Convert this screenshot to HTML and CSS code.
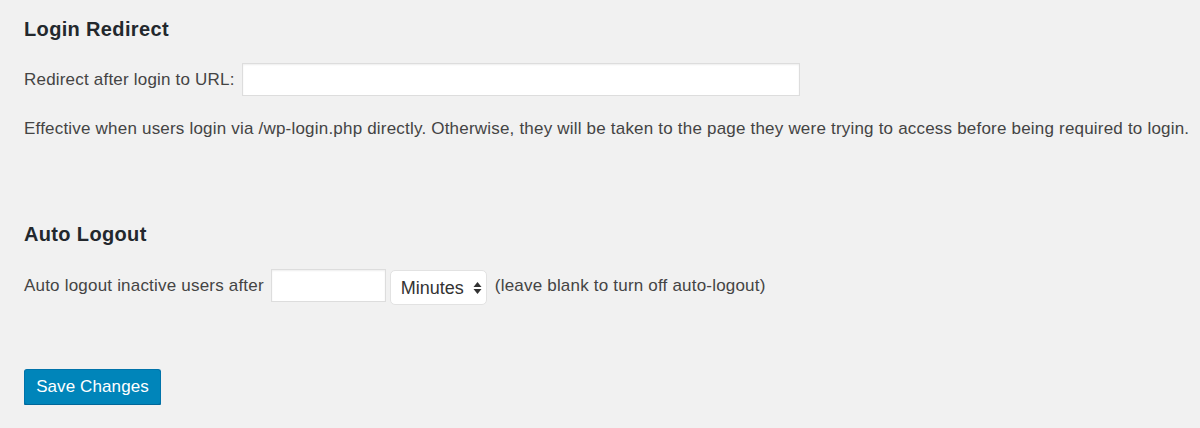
FILE: index.html
```html
<!DOCTYPE html>
<html lang="en">
<head>
    <meta charset="UTF-8">
    <title>Settings</title>
    <link rel="stylesheet" href="styles.css">
</head>
<body>
    <div class="wrap">
        <!-- Login redirect -->
        <h2 class="section-title">Login Redirect</h2>
        <div class="field-row">
            <label for="redirect-url">Redirect after login to URL:</label>
            <input type="text" id="redirect-url" class="url-input">
        </div>
        <p class="description">Effective when users login via /wp-login.php directly. Otherwise, they will be taken to the page they were trying to access before being required to login.</p>

        <!-- Auto logout -->
        <h2 class="section-title second">Auto Logout</h2>
        <div class="field-row logout">
            <label for="logout-time">Auto logout inactive users after</label>
            <input type="text" id="logout-time" class="small-input">
            <div class="select-wrap">
                <select>
                    <option>Minutes</option>
                    <option>Hours</option>
                    <option>Days</option>
                </select>
                <svg class="select-arrows" width="9" height="14" viewBox="0 0 9 14">
                    <path d="M4.5 1 L8.5 6 L0.5 6 Z" fill="#333"/>
                    <path d="M4.5 13 L8.5 8 L0.5 8 Z" fill="#333"/>
                </svg>
            </div>
            <span class="hint">(leave blank to turn off auto-logout)</span>
        </div>

        <div class="submit">
            <button class="button-primary">Save Changes</button>
        </div>
    </div>
</body>
</html>
```

FILE: styles.css
```css
body {
    margin: 0;
    background: #f1f1f1;
    font-family: "Liberation Sans", Arial, sans-serif;
    color: #444;
    font-size: 17px;
    letter-spacing: 0.2px;
}

.wrap {
    padding: 16px 24px 0;
}

/* Titulos das secoes */
.section-title {
    margin: 0;
    font-size: 20px;
    line-height: 26px;
    font-weight: bold;
    letter-spacing: 0.35px;
    color: #23282d;
}

.section-title.second {
    margin-top: 80px;
}

.field-row {
    display: flex;
    align-items: center;
    margin-top: 21px;
}

.field-row.logout {
    margin-top: 19px;
}

.field-row label {
    margin-right: 7px;
}

.url-input,
.small-input {
    box-sizing: border-box;
    height: 33px;
    border: 1px solid #ddd;
    box-shadow: inset 0 1px 2px rgba(0, 0, 0, 0.07);
    background: #fff;
    padding: 3px 6px;
    font-size: 16px;
    font-family: inherit;
    margin: 0;
}

.url-input {
    width: 558px;
}

.small-input {
    width: 115px;
    margin-right: 4px;
}

.select-wrap {
    position: relative;
    margin-top: 4px;
    margin-right: 8px;
}

.select-wrap select {
    appearance: none;
    -webkit-appearance: none;
    box-sizing: border-box;
    width: 97px;
    height: 35px;
    border: 1px solid #e2e2e2;
    border-radius: 5px;
    background: #fff;
    font-family: inherit;
    font-size: 18px;
    color: #333;
    padding: 0 20px 0 10px;
    margin: 0;
}

.select-arrows {
    position: absolute;
    right: 5px;
    top: 11px;
    pointer-events: none;
}

.description {
    margin: 21px 0 0;
    line-height: 24px;
    white-space: nowrap;
}

.submit {
    margin-top: 64px;
}

.button-primary {
    box-sizing: border-box;
    width: 137px;
    height: 36px;
    background: #0085ba;
    border: 1px solid #0073aa;
    border-bottom-color: #006799;
    box-shadow: 0 1px 0 #006799;
    border-radius: 3px;
    color: #fff;
    font-family: inherit;
    font-size: 17px;
    letter-spacing: 0.1px;
    cursor: pointer;
}
```
